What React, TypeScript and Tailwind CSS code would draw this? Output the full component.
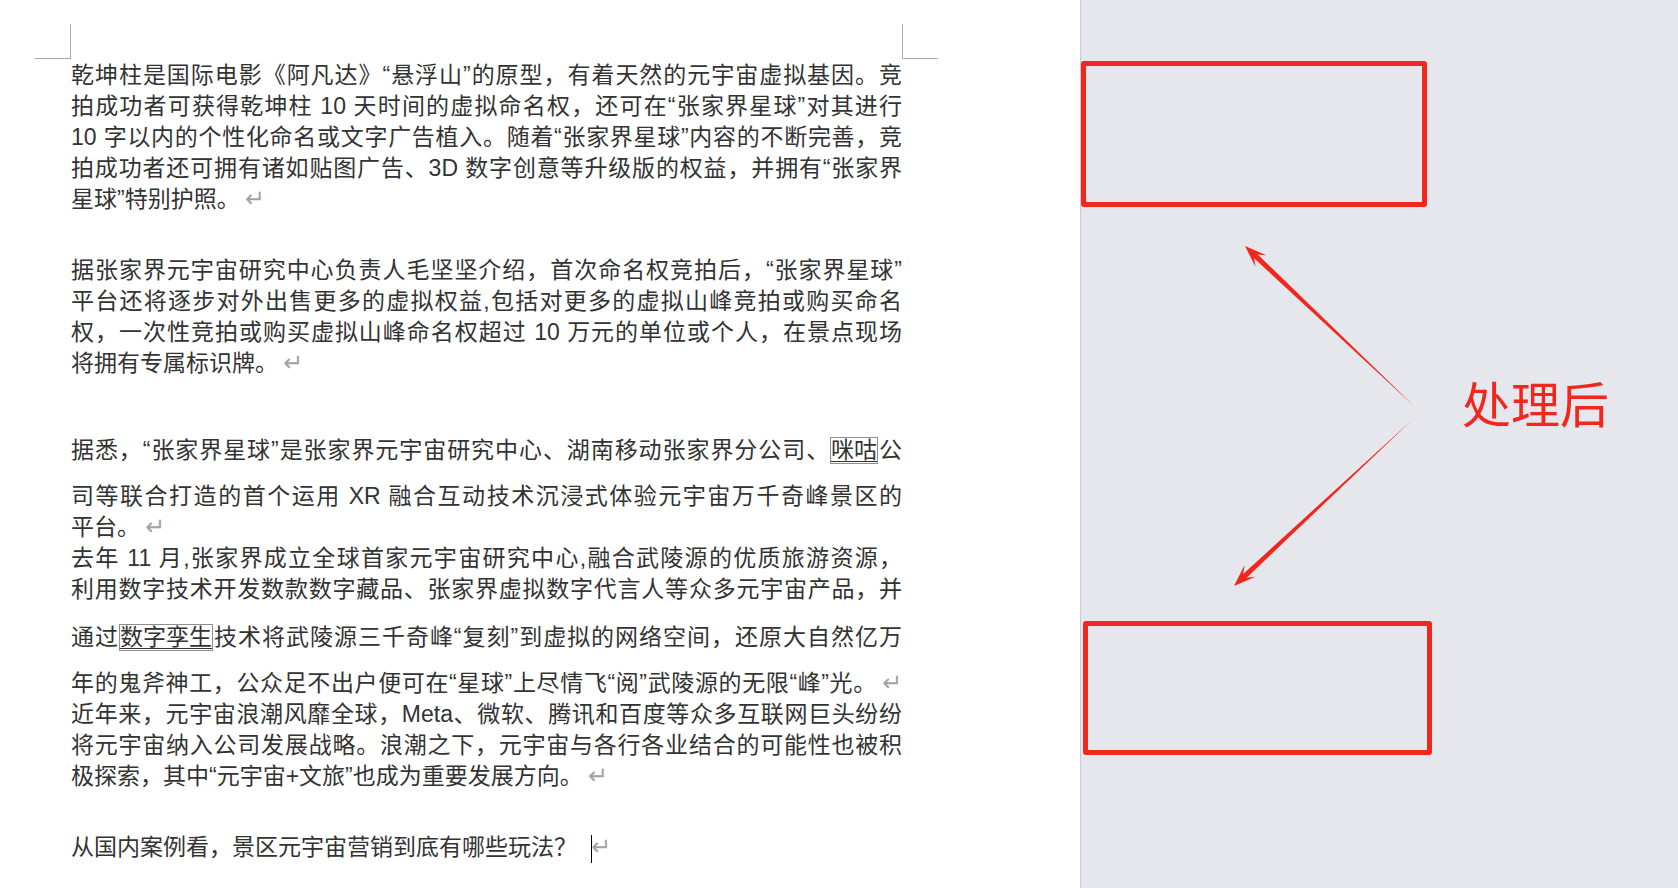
import type { ReactNode } from 'react';

const RED = '#f1271d';

function Ret() {
    return <span className="ml-[5px] font-['DejaVu_Sans'] text-[24px] leading-none text-[#a3a3a3]">↵</span>;
}

function Line({ children, last, className = '' }: { children: ReactNode; last?: boolean; className?: string }) {
    return (
        <div className={`h-[31px] leading-[31px] ${last ? 'text-left' : 'text-justify [text-align-last:justify]'} ${className}`}>
            {children}
        </div>
    );
}

function Boxed({ children }: { children: ReactNode }) {
    return (
        <span className="inline-block border border-[#8f8f8f] leading-[25px] underline decoration-1 underline-offset-[3px]">
            {children}
        </span>
    );
}

// tapered arrow: thin at the tail, barbed head at the tip
function arrowPoints(x1: number, y1: number, x2: number, y2: number) {
    const dx = x2 - x1;
    const dy = y2 - y1;
    const len = Math.hypot(dx, dy);
    const ux = dx / len;
    const uy = dy / len;
    const px = -uy;
    const py = ux;
    const head = 22;
    const notch = 15;
    const barb = 8;
    const shaft = 2.6;
    const bx = x2 - ux * head;
    const by = y2 - uy * head;
    const nx = x2 - ux * notch;
    const ny = y2 - uy * notch;
    return [
        [x1, y1],
        [nx + px * shaft, ny + py * shaft],
        [bx + px * barb, by + py * barb],
        [x2, y2],
        [bx - px * barb, by - py * barb],
        [nx - px * shaft, ny - py * shaft],
    ]
        .map(p => p.map(v => v.toFixed(1)).join(','))
        .join(' ');
}

export default function App() {
    return (
        <div className="flex h-[888px] w-full overflow-hidden bg-white">
            {/* document page */}
            <div className="w-[1080px] shrink-0 bg-white pl-[35px] font-['Liberation_Sans','Noto_Sans_CJK_SC',sans-serif] text-[23px] text-[#333]">
                <div className="flex h-[59px] pt-[24px]">
                    <div className="w-[36px] border-r border-b border-[#ababab]" />
                    <div className="w-[831px]" />
                    <div className="w-[36px] border-l border-b border-[#ababab]" />
                </div>

                <div className="ml-[36px] w-[831px] pt-[1px]">
                    <Line>乾坤柱是国际电影《阿凡达》“悬浮山”的原型，有着天然的元宇宙虚拟基因。竞</Line>
                    <Line>拍成功者可获得乾坤柱 10 天时间的虚拟命名权，还可在“张家界星球”对其进行</Line>
                    <Line>10 字以内的个性化命名或文字广告植入。随着“张家界星球”内容的不断完善，竞</Line>
                    <Line>拍成功者还可拥有诸如贴图广告、3D 数字创意等升级版的权益，并拥有“张家界</Line>
                    <Line last>星球”特别护照。<Ret /></Line>

                    <Line className="mt-[40px]">据张家界元宇宙研究中心负责人毛坚坚介绍，首次命名权竞拍后，“张家界星球”</Line>
                    <Line>平台还将逐步对外出售更多的虚拟权益,包括对更多的虚拟山峰竞拍或购买命名</Line>
                    <Line>权，一次性竞拍或购买虚拟山峰命名权超过 10 万元的单位或个人，在景点现场</Line>
                    <Line last>将拥有专属标识牌。<Ret /></Line>

                    <Line className="mt-[56px]">据悉，“张家界星球”是张家界元宇宙研究中心、湖南移动张家界分公司、<Boxed>咪咕</Boxed>公</Line>
                    <Line className="mt-[15px]">司等联合打造的首个运用 XR 融合互动技术沉浸式体验元宇宙万千奇峰景区的</Line>
                    <Line last>平台。<Ret /></Line>

                    <Line>去年 11 月,张家界成立全球首家元宇宙研究中心,融合武陵源的优质旅游资源，</Line>
                    <Line>利用数字技术开发数款数字藏品、张家界虚拟数字代言人等众多元宇宙产品，并</Line>
                    <Line className="mt-[17px]">通过<Boxed>数字孪生</Boxed>技术将武陵源三千奇峰“复刻”到虚拟的网络空间，还原大自然亿万</Line>
                    <Line className="mt-[15px]">年的鬼斧神工，公众足不出户便可在“星球”上尽情飞“阅”武陵源的无限“峰”光。<Ret /></Line>

                    <Line>近年来，元宇宙浪潮风靡全球，Meta、微软、腾讯和百度等众多互联网巨头纷纷</Line>
                    <Line>将元宇宙纳入公司发展战略。浪潮之下，元宇宙与各行各业结合的可能性也被积</Line>
                    <Line last>极探索，其中“元宇宙+文旅”也成为重要发展方向。<Ret /></Line>

                    <Line last className="mt-[40px]">
                        从国内案例看，景区元宇宙营销到底有哪些玩法？
                        <span className="ml-[14px] inline-block h-[28px] w-px bg-black align-middle" />
                        <span className="-ml-[1px] font-['DejaVu_Sans'] text-[24px] leading-none text-[#a3a3a3]">↵</span>
                    </Line>
                </div>
            </div>

            {/* annotation panel */}
            <div className="relative flex-1 border-l border-[#c9cbd0] bg-[#e5e7ec]">
                <div className="absolute left-0 top-[61px] h-[146px] w-[346px] rounded-[3px] border-[5px] border-[#f1271d]" />
                <div className="absolute left-[2px] top-[621px] h-[134px] w-[349px] rounded-[3px] border-[5px] border-[#f1271d]" />

                <svg className="absolute inset-0 h-full w-full" xmlns="http://www.w3.org/2000/svg">
                    <polygon points={arrowPoints(334, 407, 164, 246)} fill={RED} />
                    <polygon points={arrowPoints(331, 420, 153, 586)} fill={RED} />
                </svg>

                <div className="absolute left-[381px] top-[377px] font-['Noto_Sans_CJK_SC',sans-serif] text-[49px] leading-none text-[#f1271d]">
                    处理后
                </div>
            </div>
        </div>
    );
}
